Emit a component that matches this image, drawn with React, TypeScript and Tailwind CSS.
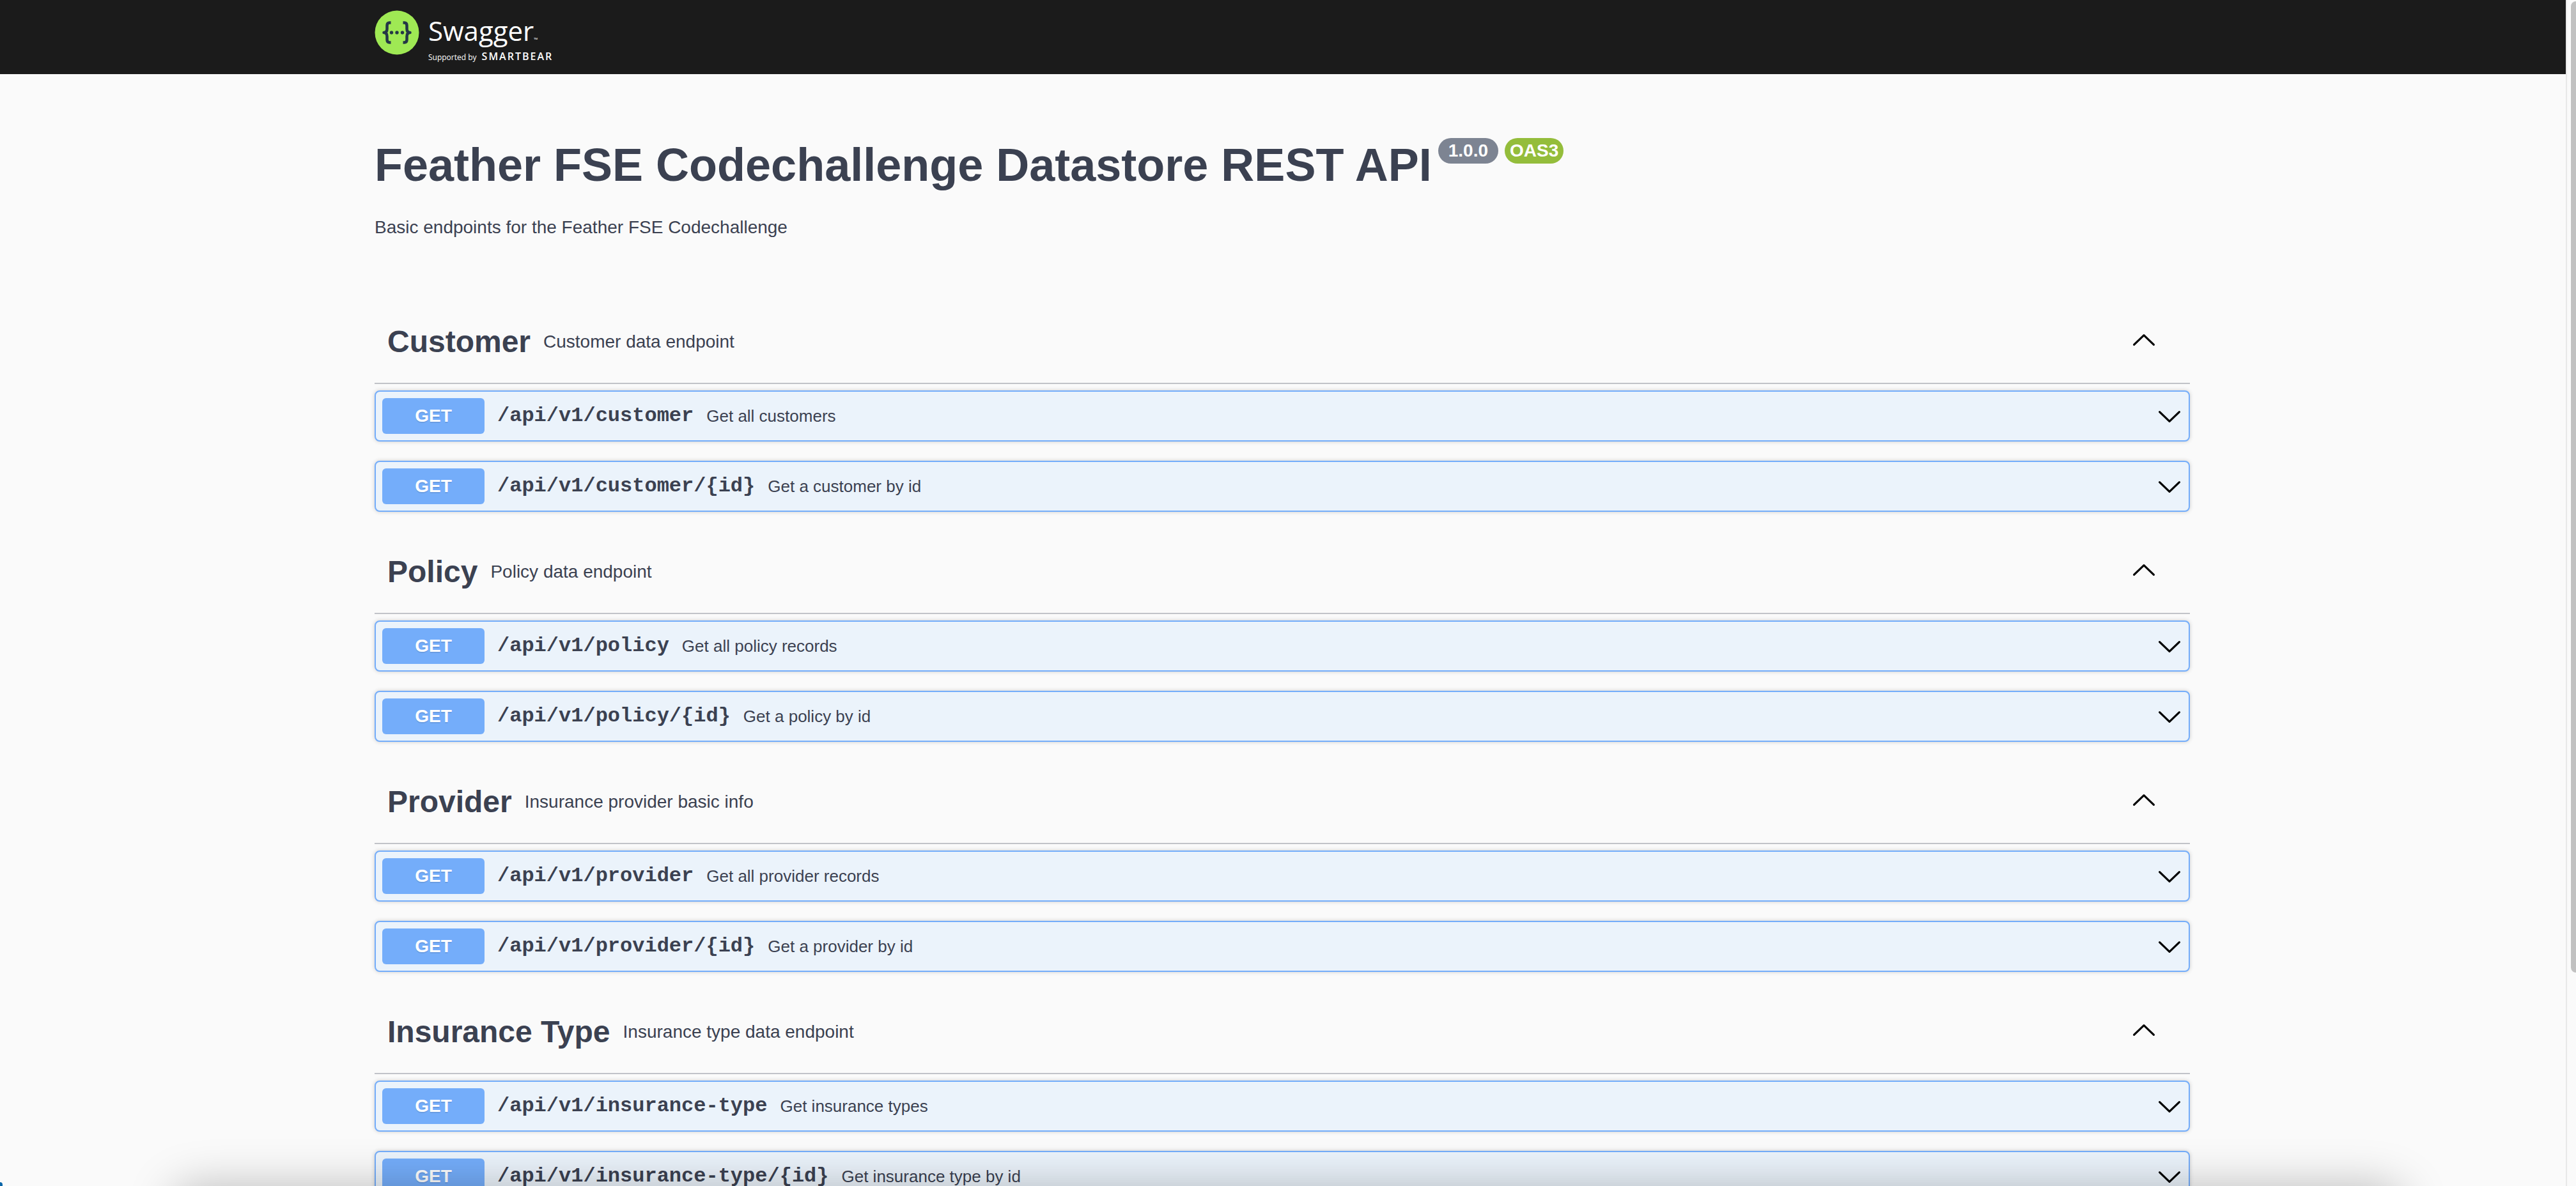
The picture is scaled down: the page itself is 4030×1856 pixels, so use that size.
import React, { useState } from "react";

type Endpoint = { path: string; summary: string };
type Tag = { name: string; description: string; endpoints: Endpoint[] };

const TAGS: Tag[] = [
  {
    name: "Customer",
    description: "Customer data endpoint",
    endpoints: [
      { path: "/api/v1/customer", summary: "Get all customers" },
      { path: "/api/v1/customer/{id}", summary: "Get a customer by id" },
    ],
  },
  {
    name: "Policy",
    description: "Policy data endpoint",
    endpoints: [
      { path: "/api/v1/policy", summary: "Get all policy records" },
      { path: "/api/v1/policy/{id}", summary: "Get a policy by id" },
    ],
  },
  {
    name: "Provider",
    description: "Insurance provider basic info",
    endpoints: [
      { path: "/api/v1/provider", summary: "Get all provider records" },
      { path: "/api/v1/provider/{id}", summary: "Get a provider by id" },
    ],
  },
  {
    name: "Insurance Type",
    description: "Insurance type data endpoint",
    endpoints: [
      { path: "/api/v1/insurance-type", summary: "Get insurance types" },
      { path: "/api/v1/insurance-type/{id}", summary: "Get insurance type by id" },
    ],
  },
];

function Chevron({ up = false }: { up?: boolean }) {
  return (
    <svg viewBox="0 0 40 40" className="size-10 shrink-0" fill="none" stroke="#000" strokeWidth="3.200" strokeLinecap="round" strokeLinejoin="round" aria-hidden="true">
      <path d={up ? "M4.600 24.400 L20 9.600 L35.400 24.400" : "M4.600 13.600 L20 28.400 L35.400 13.600"} />
    </svg>
  );
}

function Logo() {
  return (
    <a href="#" aria-label="Swagger, supported by SmartBear" className="flex items-start gap-3.5 text-white">
      <svg viewBox="0 0 70 70" className="size-[70px] shrink-0" aria-hidden="true">
        <circle cx="35" cy="35" r="34.500" fill="#9fe954" />
        <g fill="none" stroke="#243746" strokeWidth="4.500" strokeLinejoin="round">
          <path d="M25.500 19.500 h-2 c-3 0 -4 1.500 -4 4.500 v5 c0 4 -1.500 6 -5 6 c3.500 0 5 2 5 6 v5 c0 3 1 4.500 4 4.500 h2" />
          <path d="M44.500 19.500 h2 c3 0 4 1.500 4 4.500 v5 c0 4 1.500 6 5 6 c-3.500 0 -5 2 -5 6 v5 c0 3 -1 4.500 -4 4.500 h-2" />
        </g>
        <g fill="#243746">
          <circle cx="26.500" cy="35" r="2.700" />
          <circle cx="35" cy="35" r="2.700" />
          <circle cx="43.500" cy="35" r="2.700" />
        </g>
      </svg>
      <span className="flex flex-col">
        <span className="flex items-end font-['Open_Sans'] text-[42px] leading-[64px]">
          Swagger<span className="text-[8px] leading-9">™</span>
        </span>
        <span className="flex items-baseline gap-2 leading-4">
          <span className="font-['Open_Sans'] text-xs leading-4">Supported by</span>
          <span className="font-['Open_Sans'] text-base leading-4 font-semibold tracking-[2px]">SMARTBEAR</span>
        </span>
      </span>
    </a>
  );
}

function EndpointRow({ path, summary }: Endpoint) {
  return (
    <button
      type="button"
      className="flex w-full items-center rounded-lg border-2 border-[#74adfa] bg-[#ebf3fb] p-2.5 text-left shadow-[0_0_6px_rgba(0,0,0,0.19)]"
    >
      <span className="w-40 shrink-0 rounded-md bg-[#74adfa] text-center text-[28px] leading-[56px] font-bold text-white [text-shadow:0_2px_0_rgba(0,0,0,0.1)]">
        GET
      </span>
      <span className="px-5 font-['Liberation_Mono',monospace] text-[32px] leading-9 font-bold">{path}</span>
      <span className="flex-1 text-[26px] leading-9">{summary}</span>
      <Chevron />
    </button>
  );
}

function TagSection({ tag }: { tag: Tag }) {
  const [open, setOpen] = useState(true);
  return (
    <section>
      <h3 className="mb-2.5 border-b-2 border-[#c1c3c8]">
        <button
          type="button"
          aria-expanded={open}
          onClick={() => setOpen(!open)}
          className="flex h-32 w-full items-center pr-[52px] pl-5 text-left"
        >
          <span className="text-5xl leading-[56px] font-bold">{tag.name}</span>
          <span className="flex-1 px-5 text-[28px] leading-10 font-normal">{tag.description}</span>
          <Chevron up={open} />
        </button>
      </h3>
      {open && (
        <div className="flex flex-col gap-[30px] pb-[30px]">
          {tag.endpoints.map((e) => (
            <EndpointRow key={e.path} {...e} />
          ))}
        </div>
      )}
    </section>
  );
}

export default function App() {
  return (
    <div className="relative flex h-screen overflow-hidden bg-[#fafafa] font-['Liberation_Sans',Arial,sans-serif] text-[#3b4151]">
      <div className="min-w-0 flex-1">
        <header className="h-[116px] bg-[#1b1b1b] pr-0.5">
          <div className="mx-auto flex max-w-[2920px] px-10 pt-4">
            <Logo />
          </div>
        </header>
        <div className="pr-0.5">
          <main className="mx-auto max-w-[2920px] px-10">
            <div className="pt-[100px] pb-[95px]">
              <div className="flex items-start gap-2.5">
                <h1 className="text-[72px] leading-[84px] font-bold">Feather FSE Codechallenge Datastore REST API</h1>
                <div className="flex gap-2.5 text-[28px] leading-10 font-bold text-white">
                  <span className="rounded-full bg-[#7d8492] px-4">1.0.0</span>
                  <span className="rounded-full bg-[#94bd3b] px-2">OAS3</span>
                </div>
              </div>
              <p className="mt-9 text-[28px] leading-10">Basic endpoints for the Feather FSE Codechallenge</p>
            </div>
            {TAGS.map((tag) => (
              <TagSection key={tag.name} tag={tag} />
            ))}
          </main>
        </div>
      </div>
      <div className="w-4 border-l-2 border-[#e8e8e8] pt-0.5 pl-1.5" aria-hidden="true">
        <div className="h-[82%] rounded-l-lg bg-[#c1c1c1]" />
      </div>
      <div className="pointer-events-none absolute inset-x-[268px] -bottom-20 h-20 rounded-[40px] shadow-[0_0_70px_rgba(0,0,0,0.25)]" aria-hidden="true" />
      <div className="pointer-events-none absolute bottom-0 left-0 h-1.5 w-1 rounded-tr-full bg-[#0b66a8]" aria-hidden="true" />
    </div>
  );
}
